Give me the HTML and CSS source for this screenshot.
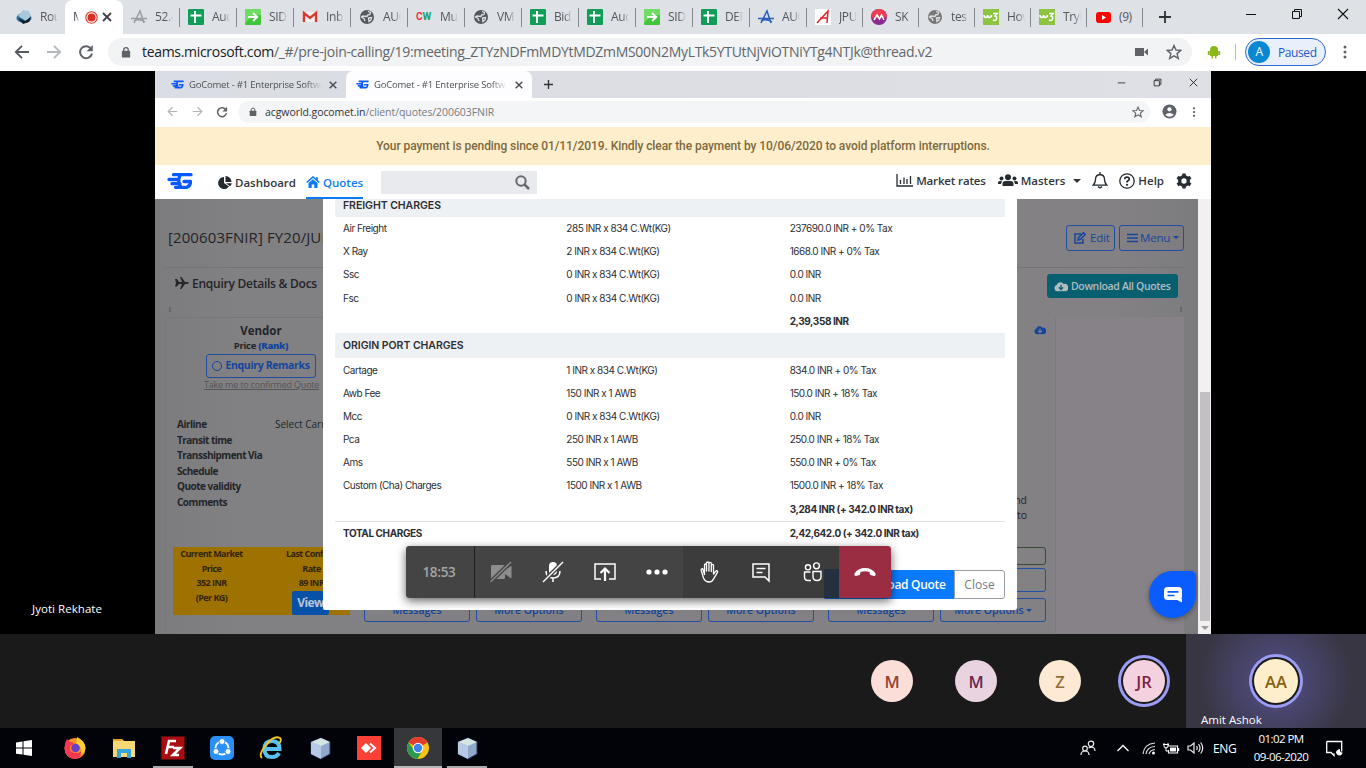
FILE: index.html
```html
<!DOCTYPE html>
<html lang="en">
<head>
<meta charset="utf-8">
<title>Meeting</title>
<link rel="stylesheet" href="styles.css">
</head>
<body>
<svg class="defs" width="0" height="0">
  <symbol id="sheet" viewBox="0 0 16 16"><rect width="16" height="16" rx="1" fill="#0f9d58"/><path d="M7 2v12M2.5 6.5h11" stroke="#fff" stroke-width="2"/></symbol>
  <symbol id="go" viewBox="0 0 16 16"><rect width="16" height="16" rx="1" fill="#3fc63b"/><path d="M0 0h16v6q-9 0-16 8z" fill="#6fdc62"/><path d="M3 8h9M8 4l4.3 4L8 12" fill="none" stroke="#fff" stroke-width="1.8"/></symbol>
  <symbol id="globe" viewBox="0 0 16 16"><circle cx="8" cy="8" r="7" fill="currentColor"/><path d="M9 2.500l2.500 1L11 5.500 8.500 6 8 7.500l-4-.5-1.500 1 2.500 1.500 1 2.500M9.500 9l3-.5-.5 2.500-2 1.500z" fill="none" stroke="#dee1e6" stroke-width="1.300"/></symbol>
  <symbol id="arch" viewBox="0 0 16 16"><path d="M3 14L9 2l4 12M0 9.5h16M3 12q5-3 11 1" fill="none" stroke="currentColor" stroke-width="1.5"/></symbol>
  <symbol id="w3" viewBox="0 0 16 16"><rect width="16" height="16" fill="#8bc53f"/><path d="M1 6q0 2.500 1.800 2.500T4.600 6q0 2.500 1.800 2.500T8.500 6M10 4.500h4l-2 2.500q2.500.5 1.500 3T10 11" fill="none" stroke="#fff" stroke-width="1.6"/></symbol>
  <symbol id="lock" viewBox="0 0 12 14"><rect x="1" y="5" width="10" height="8" rx="1" fill="#5f6368"/><path d="M3.3 6V3.8a2.7 2.7 0 015.4 0V6" fill="none" stroke="#5f6368" stroke-width="1.5"/></symbol>
  <symbol id="back" viewBox="0 0 16 16"><path d="M15 8H2M8 1.8L1.8 8 8 14.2" fill="none" stroke="currentColor" stroke-width="1.8"/></symbol>
  <symbol id="reload" viewBox="0 0 16 16"><path d="M13.2 5A6 6 0 1014 9.5" fill="none" stroke="#5f6368" stroke-width="2"/><path d="M14.8 1v6.3H8.5z" fill="#5f6368"/></symbol>
  <symbol id="star" viewBox="0 0 16 16"><path d="M8 1.5l2 4.5 4.8.4-3.7 3.2 1.2 4.8L8 11.8l-4.3 2.6 1.2-4.8L1.2 6.4 6 6z" fill="none" stroke="#5f6368" stroke-width="1.4"/></symbol>
  <symbol id="dots" viewBox="0 0 4 16"><g fill="#5f6368"><circle cx="2" cy="3" r="1.5"/><circle cx="2" cy="8" r="1.5"/><circle cx="2" cy="13" r="1.5"/></g></symbol>
  <symbol id="x" viewBox="0 0 12 12"><path d="M2 2l8 8M10 2l-8 8" stroke="currentColor" stroke-width="1.8"/></symbol>
  <symbol id="thinx" viewBox="0 0 12 12"><path d="M1 1l10 10M11 1L1 11" stroke="#111" stroke-width="1.1"/></symbol>
  <symbol id="min" viewBox="0 0 12 12"><path d="M1 6.5h10" stroke="#111"/></symbol>
  <symbol id="max" viewBox="0 0 12 12"><path d="M1.5 3.5h7v7h-7zM3.5 3.5v-2h7v7h-2" fill="none" stroke="#111"/></symbol>
  <symbol id="plus" viewBox="0 0 12 12"><path d="M6 0v12M0 6h12" stroke="#303336" stroke-width="1.8"/></symbol>
  <symbol id="comet" viewBox="0 0 26 18"><path d="M6.500 2.700H24M2 7.500h10M5 11.700h8M13 3.500q-3 6 1 11.500M8.500 15.300H20q3.500-1.500 3.500-5.800H17" fill="none" stroke="#0a58ff" stroke-width="3.300" stroke-linecap="round" stroke-linejoin="round"/></symbol>
  <symbol id="cloud" viewBox="0 0 16 12"><path d="M4 11.500a3.700 3.700 0 01-1-7.200A4.500 4.500 0 0111 3a4.300 4.300 0 012 8.500z" fill="currentColor"/><path d="M8 4v5M5.500 7L8 9.500 10.500 7" stroke="var(--hole)" stroke-width="1.500" fill="none"/></symbol>
  <symbol id="cube" viewBox="0 0 24 24"><path d="M3 6l10-4 9 4v12l-9 5-10-5z" fill="#8fa8cc" stroke="#26345f"/><path d="M3 6l10-4 9 4-9 4z" fill="#d5e5e1"/><path d="M3 6l10 4v13L3 18z" fill="#b6c9e5"/></symbol>
</svg>

<header class="tabs">
  <div class="tab first"><svg class="fav"><ellipse cx="8" cy="9" rx="7.500" ry="5" fill="#2d6f98"/><path d="M2 7l5-6 6 1 2 5-5 5z" fill="#a9c8dc"/><path d="M2 9l7 3 6-4-2 5-6 2z" fill="#13202b"/></svg><span class="tt">Rou</span></div>
  <div class="tab active"><span class="tt">M</span><svg width="13" height="13" viewBox="0 0 13 13"><circle cx="6.500" cy="6.500" r="5.700" fill="none" stroke="#d93025" stroke-width="1.100"/><circle cx="6.500" cy="6.500" r="4" fill="#d93025"/></svg><svg class="cl" width="12" height="12"><use href="#x"/></svg></div>
  <div class="tab"><svg class="fav c-gray"><use href="#arch"/></svg><span class="tt">52.4</span></div>
  <div class="tab"><svg class="fav"><use href="#sheet"/></svg><span class="tt">Auc</span></div>
  <div class="tab"><svg class="fav"><use href="#go"/></svg><span class="tt">SID</span></div>
  <div class="tab"><svg class="fav"><path d="M1 3h14v10H1z" fill="#f1f1f1"/><path d="M2 13V4l6 5 6-5v9" fill="none" stroke="#d93a2f" stroke-width="2.400"/></svg><span class="tt">Inb</span></div>
  <div class="tab"><svg class="fav c-dark"><use href="#globe"/></svg><span class="tt">AUC</span></div>
  <div class="tab"><span class="fav cw"><i>C</i>W</span><span class="tt">Mu</span></div>
  <div class="tab"><svg class="fav c-dark"><use href="#globe"/></svg><span class="tt">VM</span></div>
  <div class="tab"><svg class="fav"><use href="#sheet"/></svg><span class="tt">Bid</span></div>
  <div class="tab"><svg class="fav"><use href="#sheet"/></svg><span class="tt">Auc</span></div>
  <div class="tab"><svg class="fav"><use href="#go"/></svg><span class="tt">SID</span></div>
  <div class="tab"><svg class="fav"><use href="#sheet"/></svg><span class="tt">DEF</span></div>
  <div class="tab"><svg class="fav c-blue"><use href="#arch"/></svg><span class="tt">AUC</span></div>
  <div class="tab n"><svg class="fav"><rect width="16" height="16" fill="#fff"/><path d="M2 14L13 2l-1 12M5 9h8" fill="none" stroke="#e3202b" stroke-width="1.500"/></svg><span class="tt">JPU</span></div>
  <div class="tab n"><svg class="fav"><circle cx="8" cy="8" r="8" fill="#8b2a8f"/><path d="M0 8a8 8 0 0116 0q-8 3-16 0" fill="#ee3e51"/><path d="M3 11l3-5 2.500 4 2-4 2.500 5" fill="none" stroke="#fff" stroke-width="1.500"/></svg><span class="tt">SK</span></div>
  <div class="tab n"><svg class="fav c-mid"><use href="#globe"/></svg><span class="tt">tes</span></div>
  <div class="tab n"><svg class="fav"><use href="#w3"/></svg><span class="tt">How</span></div>
  <div class="tab n"><svg class="fav"><use href="#w3"/></svg><span class="tt">Tryi</span></div>
  <div class="tab n"><svg class="fav"><rect x="1" y="3" width="15" height="11" rx="3" fill="#f00"/><path d="M7 6l4 2.500L7 11z" fill="#fff"/></svg><span class="tt">(9)</span></div>
  <svg class="newtab" width="12" height="12"><use href="#plus"/></svg>
  <div class="win"><svg width="12" height="12"><use href="#min"/></svg><svg width="12" height="12"><use href="#max"/></svg><svg width="12" height="12"><use href="#thinx"/></svg></div>
</header>

<div class="toolbar">
  <svg class="c-dark" width="16" height="16"><use href="#back"/></svg>
  <svg class="fwd" width="16" height="16"><use href="#back"/></svg>
  <svg width="16" height="16"><use href="#reload"/></svg>
  <div class="omni">
    <svg width="10" height="13"><use href="#lock"/></svg>
    <span class="url"><b>teams.microsoft.com</b>/_#/pre-join-calling/19:meeting_ZTYzNDFmMDYtMDZmMS00N2MyLTk5YTUtNjViOTNiYTg4NTJk@thread.v2</span>
    <svg class="cam" width="13" height="10"><path d="M0 1h9v8H0zM9 5l4-3.500v7z" fill="#5f6368"/></svg>
    <svg width="16" height="16"><use href="#star"/></svg>
  </div>
  <svg class="droid" width="14" height="14"><path d="M3 5a4 4 0 018 0zM3 5h8v6H3zM0.800 6h2v4h-2zM11.200 6h2v4h-2zM4.500 11h1.500v2.500H4.500zM8 11h1.500v2.500H8z" fill="#8ab81c"/></svg>
  <i class="vsep"></i>
  <div class="profile"><span>A</span>Paused</div>
  <svg class="kebab" width="4" height="16"><use href="#dots"/></svg>
</div>

<main class="stage">
  <div class="share">
    <div class="s-tabs">
      <div class="s-tab"><svg width="13" height="9"><use href="#comet"/></svg><span>GoComet - #1 Enterprise Software</span><svg width="10" height="10"><use href="#x"/></svg></div>
      <div class="s-tab on"><svg width="13" height="9"><use href="#comet"/></svg><span>GoComet - #1 Enterprise Software</span><svg width="10" height="10"><use href="#x"/></svg></div>
      <svg class="s-plus" width="9" height="9"><use href="#plus"/></svg>
      <div class="s-win"><svg width="9" height="9"><use href="#min"/></svg><svg width="9" height="9"><use href="#max"/></svg><svg width="9" height="9"><use href="#thinx"/></svg></div>
    </div>
    <div class="s-bar">
      <svg class="dim" width="11" height="11"><use href="#back"/></svg>
      <svg class="dim flip" width="11" height="11"><use href="#back"/></svg>
      <svg width="12" height="12"><use href="#reload"/></svg>
      <div class="s-omni"><svg width="8" height="10"><use href="#lock"/></svg><span><b>acgworld.gocomet.in</b>/client/quotes/200603FNIR</span><svg width="12" height="12"><use href="#star"/></svg></div>
      <svg width="15" height="15"><circle cx="7.500" cy="7.500" r="7" fill="#5f6368"/><circle cx="7.500" cy="5.300" r="2.100" fill="#fff"/><path d="M3.200 10.800q4.300-3.600 8.600 0-4.300 3.800-8.600 0" fill="#fff"/></svg>
      <svg width="4" height="12"><use href="#dots"/></svg>
    </div>
    <div class="notice">Your payment is pending since 01/11/2019. Kindly clear the payment by 10/06/2020 to avoid platform interruptions.</div>
    <nav class="nav">
      <svg class="brand" width="26" height="18"><use href="#comet"/></svg>
      <div class="item dash"><svg width="14" height="13"><path d="M6 1a6 6 0 105 9.500L6 7z" fill="#252b31"/><path d="M7.500 0a6 6 0 016 6h-6zM8 7.200h5.800a6 6 0 01-1.800 3z" fill="#252b31"/></svg>Dashboard</div>
      <div class="item quotes"><svg width="14" height="12"><path d="M.7 6.500L7 1l6.300 5.500M11 1v3" fill="none" stroke="#0a7bf5" stroke-width="1.600"/><path d="M2.500 7L7 3.300 11.500 7v5H8.300V8.500H5.700V12H2.500z" fill="#0a7bf5"/></svg>Quotes</div>
      <div class="search"><svg width="15" height="15"><circle cx="6" cy="6" r="4.700" fill="none" stroke="#666a6e" stroke-width="2"/><path d="M9.500 9.500L14 14" stroke="#666a6e" stroke-width="2.500"/></svg></div>
      <div class="nav-r">
        <div class="item"><svg width="17" height="13"><path d="M1 0v12h16M4.500 10V6M8 10V3.500M11 10V5M14.500 10V2" fill="none" stroke="#252b31" stroke-width="1.300"/></svg>Market rates</div>
        <div class="item masters"><svg width="20" height="13"><g fill="#252b31"><circle cx="10" cy="3.200" r="3"/><circle cx="3.500" cy="4.500" r="2"/><circle cx="16.500" cy="4.500" r="2"/><path d="M4.500 12V9.500q0-2.500 3-2.500h5q3 0 3 2.500V12zM0 10V8.500q0-1.500 2-1.500h2l-1 3zM20 10V8.500q0-1.500-2-1.500h-2l1 3z"/></g></svg>Masters <i class="caret"></i></div>
        <svg class="bell" width="16" height="17"><path d="M1 13.200q2.500-2 2.500-6 0-4.200 4.500-4.700 4.500.5 4.500 4.700 0 4 2.500 6zM8 0v2.500M6 14.500q2 2.500 4 0" fill="none" stroke="#252b31" stroke-width="1.300"/></svg>
        <div class="item help"><svg width="16" height="16"><circle cx="8" cy="8" r="7.200" fill="none" stroke="#252b31" stroke-width="1.300"/><path d="M5.700 6.300q.1-2.200 2.300-2.200t2.300 1.800q0 1.200-2.300 2.500v1" fill="none" stroke="#252b31" stroke-width="1.700"/><circle cx="8" cy="11.800" r="1.100" fill="#252b31"/></svg>Help</div>
        <svg class="gear" width="16" height="16" viewBox="-8 -8 16 16"><circle r="4.300" fill="none" stroke="#252b31" stroke-width="3.300"/><path d="M0-7.600V-5M0 7.600V5M6.600-3.800L4.300-2.500M-6.600-3.800L-4.300-2.500M6.600 3.800L4.300 2.500M-6.600 3.800L-4.300 2.500" stroke="#252b31" stroke-width="3.400"/></svg>
      </div>
    </nav>

    <div class="view">
      <section class="page">
        <div class="head"><h1>[200603FNIR] FY20/JUN</h1>
          <span class="btn"><svg width="12" height="12"><path d="M7 2H1v9h8V7M4 8l.5-2.300L9.500.7l1.800 1.800-5 5z" fill="none" stroke="#16459c" stroke-width="1.500"/></svg>Edit</span>
          <span class="btn menu"><svg width="11" height="10"><path d="M0 1.500h11M0 5h11M0 8.500h11" stroke="#16459c" stroke-width="1.500"/></svg>Menu<i class="caret"></i></span>
        </div>
        <div class="docs"><svg width="14" height="12"><path d="M0 2l2 0 2 3h3L5 0h1.500L10 5q4-.3 4 1t-4 1L6.500 12H5l2-5H4L2 9.500H0L1 6z" fill="#24262a"/></svg><span>Enquiry Details &amp; Docs</span>
          <span class="dl"><svg width="14" height="11" viewBox="0 0 16 12"><use href="#cloud"/></svg>Download All Quotes</span></div>
        <div class="ticks"><i></i><i></i></div>
        <div class="cards">
          <aside class="vendor">
            <h2>Vendor</h2><p class="price">Price <b>(Rank)</b></p>
            <span class="remarks"><i></i>Enquiry Remarks</span>
            <u>Take me to confirmed Quote</u>
            <dl><dt>Airline</dt><dd>Select Carrier</dd><dt>Transit time</dt><dd></dd><dt>Transshipment Via</dt><dd></dd><dt>Schedule</dt><dd></dd><dt>Quote validity</dt><dd></dd><dt>Comments</dt><dd></dd></dl>
            <div class="market"><div>Current Market<br>Price<br>352 INR<br>(Per KG)</div><div class="last">Last Confirm<br>Rate<br>89 INR<span class="view-b">View</span></div></div>
          </aside>
          <div class="quotes-row">
            <div class="pair"><span>Messages</span><span>More Options</span></div>
            <div class="pair"><span>Messages</span><span>More Options</span></div>
            <div class="pair lastcol"><svg class="cd" width="12" height="10" viewBox="0 0 16 12"><use href="#cloud"/></svg><p>and<br>to</p><em></em><em class="b"></em><div class="pair"><span>Messages</span><span>More Options<i class="caret"></i></span></div></div>
          </div>
          <div class="blank"></div>
        </div>
      </section>
      <div class="sb"><i></i><b></b></div>
      <div class="chat"><svg width="20" height="17"><rect x="1" y="1" width="18" height="13" rx="3.500" fill="#fff"/><path d="M12 13h7v3.500z" fill="#fff"/><path d="M4.500 5.800h11M4.500 9.500h7" stroke="#0a5cff" stroke-width="1.700"/></svg></div>

      <div class="modal">
        <table>
          <tr class="h top"><th colspan="3">FREIGHT CHARGES</th></tr>
          <tr><td>Air Freight</td><td>285 INR x 834 C.Wt(KG)</td><td>237690.0 INR + 0% Tax</td></tr>
          <tr><td>X Ray</td><td>2 INR x 834 C.Wt(KG)</td><td>1668.0 INR + 0% Tax</td></tr>
          <tr><td>Ssc</td><td>0 INR x 834 C.Wt(KG)</td><td>0.0 INR</td></tr>
          <tr><td>Fsc</td><td>0 INR x 834 C.Wt(KG)</td><td>0.0 INR</td></tr>
          <tr class="sum"><td></td><td></td><td>2,39,358 INR</td></tr>
          <tr class="h"><th colspan="3">ORIGIN PORT CHARGES</th></tr>
          <tr><td>Cartage</td><td>1 INR x 834 C.Wt(KG)</td><td>834.0 INR + 0% Tax</td></tr>
          <tr><td>Awb Fee</td><td>150 INR x 1 AWB</td><td>150.0 INR + 18% Tax</td></tr>
          <tr><td>Mcc</td><td>0 INR x 834 C.Wt(KG)</td><td>0.0 INR</td></tr>
          <tr><td>Pca</td><td>250 INR x 1 AWB</td><td>250.0 INR + 18% Tax</td></tr>
          <tr><td>Ams</td><td>550 INR x 1 AWB</td><td>550.0 INR + 0% Tax</td></tr>
          <tr><td>Custom (Cha) Charges</td><td>1500 INR x 1 AWB</td><td>1500.0 INR + 18% Tax</td></tr>
          <tr class="sum"><td></td><td></td><td>3,284 INR (+ 342.0 INR tax)</td></tr>
          <tr class="sum total"><td>TOTAL CHARGES</td><td></td><td>2,42,642.0 (+ 342.0 INR tax)</td></tr>
        </table>
        <div class="foot"><span class="dq"><svg width="15" height="12" viewBox="0 0 16 12"><use href="#cloud"/></svg>Download Quote</span><span class="close">Close</span></div>
      </div>
    </div>
  </div>
  <span class="speaker">Jyoti Rekhate</span>

  <div class="call">
    <span class="time">18:53</span>
    <span><svg width="24" height="24"><path d="M2 6.500q0-1.500 1.500-1.500h11q1.500 0 1.500 1.500V10l6.500-4.500v13L16 14v3.500q0 1.500-1.500 1.500h-11Q2 19 2 17.500z" fill="#8d8d8d"/><path d="M1.500 22L22 2" stroke="#444" stroke-width="4"/><path d="M1.500 22L22 2" stroke="#8d8d8d" stroke-width="1.300"/></svg></span>
    <span><svg width="24" height="24"><rect x="8" y="2" width="8" height="13" rx="4" fill="#fff"/><path d="M5 11q0 7 7 7t7-7M12 18v4" fill="none" stroke="#fff" stroke-width="1.500"/><path d="M2 22L22 2" stroke="#444" stroke-width="4"/><path d="M2 22L22 2" stroke="#fff" stroke-width="1.400"/></svg></span>
    <span><svg width="24" height="24"><path d="M8 19H2V4h20v15h-6" fill="none" stroke="#fff" stroke-width="1.500"/><path d="M12 21V9M7.500 13L12 8.500l4.500 4.500" fill="none" stroke="#fff" stroke-width="2.200"/></svg></span>
    <span><svg width="24" height="24"><g fill="#fff"><circle cx="4" cy="12" r="2.600"/><circle cx="12" cy="12" r="2.600"/><circle cx="20" cy="12" r="2.600"/></g></svg></span>
    <span class="d"><svg width="24" height="24"><path d="M7.500 14.500V5.200q0-1.200 1-1.200t1 1.200V11 3.200Q9.500 2 10.700 2t1.200 1.200V11 3.500q0-1.200 1.200-1.200t1.200 1.200V11.500 5.500q0-1.200 1.100-1.200t1.100 1.200v8.500l2.300-2.800q1-1 1.700-.2.400.6-.2 1.600l-4 6.800Q15 22 12.500 22 8 22 6.500 18L4.200 10.500q-.3-1.500.6-1.700t1.300 1z" fill="none" stroke="#fff" stroke-width="1.300" stroke-linejoin="round"/></svg></span>
    <span class="d"><svg width="24" height="24"><path d="M4 4h16v17l-4-4H4zM7.500 8.500h9M7.500 12.500h6" fill="none" stroke="#fff" stroke-width="1.500"/></svg></span>
    <span class="d clear"><svg width="24" height="24"><g fill="none" stroke="#fff" stroke-width="1.400"><circle cx="7" cy="7.300" r="2.600"/><circle cx="15.500" cy="5.800" r="2.900"/><path d="M9.500 12H3.500v5q0 3.500 3.500 3.500h3M12 11.500h8v5q0 4-4 4t-4-4z"/></g></svg></span>
    <span class="end"><svg width="24" height="24"><path d="M1.500 13.500Q5 8 12 8t10.500 5.500q.5 2.500-1.500 2.500l-3.500-1q-1-.5-.9-3-4.500-1.500-9.200 0 .1 2.500-.9 3L3 16q-2 0-1.500-2.500z" fill="#fff"/></svg></span>
  </div>
</main>

<section class="people">
  <div class="p"><span class="av a1">M</span></div><div class="p"><span class="av a2">M</span></div><div class="p"><span class="av a3">Z</span></div><div class="p"><span class="av a4 ring">JR</span></div>
  <div class="me"><span class="av a5 ring">AA</span><span class="nm">Amit Ashok</span></div>
</section>

<footer class="task">
  <span class="start"><svg width="24" height="24"><path d="M4 6.500l6.500-1v6H4zM11.500 5.300L20 4v7.500h-8.500zM4 12.500h6.500v6L4 17.700zM11.500 12.500H20V20l-8.500-1.300z" fill="#fff"/></svg></span>
  <span><svg width="24" height="24"><circle cx="12" cy="12.500" r="10.500" fill="#ff9224"/><path d="M1.500 12Q2 6 4 3l3 3q3 0 4 2-4 1-4 4 0 5 6 5t7-5q0 9-7 11Q3 24 1.500 12z" fill="#f4384f"/><path d="M14 1q8 4 8.500 11-1 6-5 7 3-8-4-11 0-4 .5-7z" fill="#ffcf35"/><circle cx="12.500" cy="12" r="4.300" fill="#6b3fc4"/></svg></span>
  <span><svg width="24" height="24"><path d="M1 3h9l2 2h11v16H1z" fill="#f8d775"/><path d="M1 3h9l1 2H1z" fill="#e2a52f"/><path d="M5 22v-9h14v9h-4v-5H9v5z" fill="#36a5df"/></svg></span>
  <span class="run"><svg width="24" height="24"><rect x=".5" y=".5" width="23" height="23" fill="#a90d12" stroke="#5c090b" stroke-dasharray="2 1"/><path d="M5 18L8 5h7M6.500 11H13M12 12h7l-7 7h6" fill="none" stroke="#fff" stroke-width="2.600"/></svg></span>
  <span><svg width="24" height="24"><rect width="24" height="24" rx="5" fill="#2a8ff7"/><circle cx="12" cy="12" r="6.500" fill="none" stroke="#fff" stroke-width="1.800"/><g fill="#fff" stroke="#2a8ff7"><circle cx="12" cy="5.500" r="3"/><circle cx="6" cy="15.500" r="3"/><circle cx="18" cy="15.500" r="3"/></g></svg></span>
  <span><svg width="24" height="24"><path d="M6.500 13h14q0-8-7.500-8t-7.500 8 7.500 8q5 0 7-4" fill="none" stroke="#57c1ee" stroke-width="4"/><path d="M3 22Q-1 19 7 9T21 2q2 2-1 6" fill="none" stroke="#f5c521" stroke-width="1.900"/></svg></span>
  <span><svg width="24" height="24"><use href="#cube"/></svg></span>
  <span><svg width="24" height="24"><rect width="24" height="24" fill="#ff4036"/><path d="M4 12l5-5 5 5-5 5z" fill="#fff"/><path d="M13 7.500l5 4.500-5 4.500" fill="none" stroke="#fff" stroke-width="2"/></svg></span>
  <span class="cur"><svg width="24" height="24"><circle cx="12" cy="12" r="11" fill="#fbc116"/><path d="M2.500 6.500A11 11 0 0121.500 6.500L12 12z" fill="#e33b2e"/><path d="M2.500 6.500A11 11 0 0011.500 23l4.500-8-8-1z" fill="#299b4e"/><circle cx="12" cy="12" r="5.200" fill="#fff"/><circle cx="12" cy="12" r="4.200" fill="#3f82ee"/></svg></span>
  <span class="run"><svg width="24" height="24"><use href="#cube"/></svg></span>
  <div class="tray">
    <svg width="16" height="16"><g fill="none" stroke="#eee" stroke-width="1.200"><circle cx="11" cy="3.800" r="2.700"/><circle cx="5" cy="8.500" r="2.300"/><path d="M1 15q0-4 4-4t4 4M8.500 8Q15 5.500 15 11"/></g></svg>
    <svg class="up" width="12" height="8"><path d="M.5 7L6 1.500 11.500 7" fill="none" stroke="#fff" stroke-width="1.300"/></svg>
    <svg width="14" height="14"><g fill="none" stroke="#ddd" stroke-width="1.200"><path d="M1 13Q2 3 13 2M4 13q1-7 9-7.500M7 13q1-4 6-4.500"/></g><circle cx="11.500" cy="12" r="1.500" fill="#fff"/></svg>
    <svg class="bat" width="17" height="14"><path d="M4.500 5h10v7h-9V9" fill="none" stroke="#fff" stroke-width="1.200"/><path d="M7 6.500h6v4H7zM15 7h1.200v3H15z" fill="#fff"/><path d="M1 2v3q0 2 2 2t2-2V2M0 3.500h6M3 6v4h2" fill="none" stroke="#fff"/></svg>
    <svg class="vol" width="17" height="14"><path d="M1 5h2.500L7 2v10L3.500 9H1zM9.500 5q1.500 2 0 4M11.500 3q3 4 0 8M13.700 1.500q4 5.500 0 11" fill="none" stroke="#eee" stroke-width="1.200"/></svg>
    <span class="eng">ENG</span>
    <span class="clock">01:02 PM<br>09-06-2020</span>
    <svg class="act" width="17" height="17"><path d="M.7 1.500h15v10M.7 1.500v11H5l3 3v-2" fill="none" stroke="#fff" stroke-width="1.300"/><path d="M14 9q-4 1-4 3.500 1 3.500 4.500 3 2-1 2-3-3 0-2.500-3.500z" fill="#fff"/></svg>
    <i></i>
  </div>
</footer>
</body>
</html>
```

FILE: styles.css
```css
*{box-sizing:border-box}
body{margin:0;width:1366px;height:768px;overflow:hidden;background:#000;font-family:"Open Sans","Noto Sans",sans-serif;font-size:12px;--hole:#7d8085}
.defs{position:absolute}
svg{flex:none;display:block}
i,em{font-style:normal}
h1,h2,p,dl,dd{margin:0}
.c-dark{color:#55595e}.c-gray{color:#9a9da1}.c-blue{color:#2b5fb8}.c-mid{color:#777}
.tabs{display:flex;height:34px;background:#dee1e6}
.tab{width:57px;display:flex;align-items:center;padding-left:8px;position:relative;color:#54585d}
.tab.n{width:56px}
.tab:after{content:"";position:absolute;right:0;top:8px;width:1px;height:19px;background:#85898e}
.tab.first:after,.tab.active:after{display:none}
.fav{width:16px;height:16px;margin-right:8px;flex:none}
.tt{width:18px;overflow:hidden;white-space:nowrap;font-size:12px;line-height:18px;letter-spacing:-.4px;-webkit-mask-image:linear-gradient(90deg,#000 60%,transparent)}
.tab:nth-last-child(3) .tt{-webkit-mask-image:none}
.tab.first{width:65px;padding-left:16px}
.tab.active{width:58px;background:#fff;border-radius:8px 8px 0 0;color:#4c4f53}
.tab.active .tt{width:6px;margin-right:6px}
.tab.active .cl{margin-left:3px;color:#3c4043}
.cw{font:bold 10px/16px Roboto,sans-serif;color:#18a06a}.cw i{color:#e34}
.newtab{margin:11px 0 0 16px}
.win{display:flex;gap:34px;margin:8px 0 0 74px}
.toolbar{display:flex;align-items:center;height:37px;padding:0 0 1px 14px;background:#fff}
.toolbar>svg:nth-child(-n+3){margin-right:16px}
.fwd{color:#b5b8bb;transform:scaleX(-1)}
.omni{display:flex;align-items:center;width:1084px;height:28px;margin-left:-2px;padding:0 10px 0 13px;border-radius:14px;background:#f1f3f4}
.url{flex:1;margin-left:11px;font-size:14px;line-height:20px;color:#62666a;white-space:nowrap;letter-spacing:-.31px}
.url b{font-weight:400;color:#202124}
.cam{margin-right:18px}
.droid{margin-left:15px}
.vsep{width:1px;height:16px;margin:0 9px 0 14px;background:#bbb}
.profile{display:flex;align-items:center;width:81px;height:28px;padding-left:2px;border:1px solid #2b68d0;border-radius:14px;background:#e9effb;color:#1a5bc9;font-size:12px;letter-spacing:-.4px}
.profile span{width:22px;height:22px;margin-right:8px;border-radius:50%;background:#0788d1;color:#fff;text-align:center;line-height:22px}
.kebab{margin-left:17px}
.stage{position:relative;height:563px;padding-left:155px;background:#000}
.share{width:1056px;height:563px;background:#fff;overflow:hidden}
.s-tabs{display:flex;height:27px;background:linear-gradient(90deg,#dadde3,#dfdfe6);font-size:9.500px;color:#4c5055}
.s-tab{display:flex;align-items:center;width:191px;padding:0 8px 0 16px}
.s-tab.on{width:186px;padding-left:10px;background:#fdfdff;border-radius:7px 7px 0 0}
.s-tab span{width:135px;margin:0 6px 0 5px;overflow:hidden;white-space:nowrap;letter-spacing:-.2px;-webkit-mask-image:linear-gradient(90deg,#000 88%,transparent)}
.s-tab.on span{margin-right:7px}
.s-plus{margin:9px 0 0 12px}
.s-win{display:flex;gap:27px;margin:7px 0 0 auto;padding-right:13px}
.s-bar{display:flex;align-items:center;height:29px;padding:0 12px 2px;background:#fff}
.dim{color:#b2b5ba;margin-right:14px}.flip{transform:scaleX(-1)}
.s-bar>svg:nth-child(3){margin-left:-1px}
.s-omni{display:flex;align-items:center;width:912px;height:22px;margin:0 12px 0 10px;padding:0 6px 0 11px;border-radius:11px;background:#f4f5f7;font-size:10.500px;color:#777b80}
.s-omni span{flex:1;margin-left:8px;letter-spacing:-.07px}.s-omni b{font-weight:400;color:#333}
.s-bar>svg:last-child{margin-left:15px}
.notice{height:38px;background:#ffeecb;color:#7c693e;text-align:center;font:500 12px/38px Roboto,sans-serif;letter-spacing:-.07px;white-space:nowrap}
.nav{display:flex;align-items:center;height:34px;padding:0 19px 0 12px;background:#fff}
.brand{margin-top:-2px}
.item{display:flex;align-items:center;gap:3px;font-weight:600;font-size:11.500px;color:#30363c;white-space:nowrap}
.dash{margin-left:25px}
.quotes{height:34px;margin-left:10px;padding-top:2px;color:#0a7bf5;border-bottom:2px solid #0a7bf5}
.search{display:flex;justify-content:flex-end;align-items:center;width:156px;height:23px;margin-left:18px;padding-right:7px;background:#e9eaed}
.nav-r{display:flex;align-items:center;margin:-3px 0 0 auto}
.nav-r .item:first-child{letter-spacing:-.15px}
.masters{margin-left:12px}
.caret{display:inline-block;margin-left:5px;border:4px solid transparent;border-top-color:currentColor;border-bottom:0}
.bell{margin:0 11px}.gear{margin-left:12px}
.view{position:relative;display:flex;height:435px}
.page{width:1043px;height:435px;padding:0 11px 0 10px;background:linear-gradient(90deg,#7c7c7e,#818083 8%,#848185 92%,#7b7b7d);color:#242428;overflow:hidden}
.head{display:flex;align-items:center;height:68px;padding:7px 3px 0 3px;font-size:11.500px;letter-spacing:-.2px}
.head h1{flex:1;font-weight:400;font-size:15px;letter-spacing:.1px}
.btn{display:flex;align-items:center;gap:4px;width:49px;height:26px;margin:2px 0 0 4px;padding-left:7px;border:1px solid #204ea2;border-radius:3px;color:#16459c}
.btn.menu{width:65px;gap:2px}
.btn .caret{margin:0 0 0 1px;border-width:3.500px;border-bottom:0}
.docs{display:flex;align-items:center;gap:3px;height:36px;margin-right:3px;padding:0 6px 5px 10px;border-top:1px solid #737376;font-weight:600;font-size:12px;letter-spacing:-.25px}
.docs>span:nth-child(2){flex:1}
.dl{display:flex;align-items:center;gap:3px;width:131px;height:24px;margin-top:6px;padding:0 7px;border-radius:3px;background:#075f70;color:#b2bcc0;font-size:10.500px;--hole:#075f70;white-space:nowrap;letter-spacing:-.35px}
.ticks{display:flex;justify-content:space-between;padding:4px 5px 0 4px;height:14px}
.ticks i{width:2px;height:5px;background:#68686c}
.cards{display:flex;height:317px}
.vendor{width:190px;padding:4px 0 0 7px;border-left:1px solid #79797b;border-top:1px solid #77777a;text-align:center;font-weight:600;font-size:10.500px;line-height:15.500px}
.vendor h2{margin-right:6px;font-weight:700;font-size:11.500px;line-height:17px}
.price{margin:0 6px 1px 0;line-height:14px;font-weight:700;font-size:9.500px;letter-spacing:-.3px}
.price b{color:#12459e}
.remarks{display:flex;align-items:center;justify-content:center;gap:3px;width:110px;height:24px;margin-left:33px;border:1px solid #204ea2;border-radius:3px;color:#12459e;font-weight:700;font-size:10.500px;letter-spacing:-.35px;white-space:nowrap}
.remarks i{width:10px;height:10px;border:1px solid #12459e;border-radius:50%}
.vendor u{display:block;margin-left:31px;width:116px;font-weight:400;font-size:9px;line-height:13px;letter-spacing:-.2px;text-align:left;color:#555559;white-space:nowrap}
.vendor dl{display:grid;grid-template-columns:98px 1fr;margin:26px 0 0 4px;text-align:left;white-space:nowrap;grid-auto-rows:15.500px;font-weight:700;font-size:10px;letter-spacing:-.55px}
.vendor dt{letter-spacing:-.5px}
.vendor dd{font-weight:400;letter-spacing:0;overflow:hidden}
.market{display:flex;width:177px;height:68px;margin-top:37px;background:#9e7200;color:#31240c;font-size:9px;line-height:14.700px;font-weight:700;white-space:nowrap;letter-spacing:-.55px}
.market>div{width:77px}.market .last{width:100px;padding-left:23px;position:relative}
.view-b{position:absolute;left:42px;top:44px;width:37px;height:24px;background:#0752a8;color:#b8c6d8;line-height:24px;font-size:12px;border-radius:2px}
.quotes-row{display:flex;gap:14px;margin-left:9px;align-items:flex-end;padding-bottom:12px}
.pair{display:flex;gap:6px;width:218px}
.pair span{flex:1;height:24px;border:1px solid #204ea2;border-radius:3px;color:#12459e;text-align:center;font-weight:600;font-size:10.500px;line-height:22px;white-space:nowrap}
.pair .caret{margin-left:2px;vertical-align:2px;border-width:3px;border-bottom:0}
.lastcol{flex-direction:column;align-items:stretch;gap:0}
.cd{align-self:flex-end;margin-bottom:0;color:#12459e}
.lastcol p{margin:158px 19px 24px 0;text-align:right;font-size:10.500px;line-height:15px}
.lastcol em{height:18px;margin-bottom:3px;border:1px solid #354c32;border-radius:3px}
.lastcol em.b{height:24px;margin-bottom:6px;border-color:#204ea2}
.blank{flex:1;margin-left:9px;background:#868287;border-left:1px solid #7d7b7f;border-right:3px solid #7d7b7f}
.sb{display:flex;flex-direction:column;align-items:center;width:13px;padding:193px 0 4px;background:#f3f0f2}
.sb i{width:10px;height:230px;background:#c2c0c2;margin-bottom:5px}
.sb b{border:4px solid transparent;border-top-color:#999;border-bottom:0}
.chat{position:absolute;left:994px;top:372px;display:grid;place-items:center;width:47px;height:47px;border-radius:50% 5px 50% 50%;background:#0a5cff;box-shadow:0 2px 5px #0005}
.modal{position:absolute;left:168px;top:0;width:694px;height:411px;padding:0 12px;background:#fff;border-radius:0 0 2px 2px}
table,tbody{display:block;width:670px}
table{font-family:Inter,sans-serif;font-size:10px;letter-spacing:-.48px;color:#2c2e34}
tr{display:flex;align-items:center;height:23.200px}
td,th{width:223.500px;padding:0 0 1px 8px;text-align:left;white-space:nowrap;line-height:14px}
.h{height:25.500px;background:#eef1f4}.h th{padding-bottom:0;font-size:10.500px;font-weight:600;letter-spacing:-.05px}
.top{height:18px}.top th{padding-bottom:5px}
.sum td{font-weight:700;letter-spacing:-.4px}.total{border-top:1px solid #dcdfe3;height:24px}
.foot{display:flex;justify-content:flex-end;margin-top:25px;line-height:29px}
.dq{display:flex;align-items:center;gap:4px;width:131px;height:29px;padding-left:10px;background:#0a7bff;color:#fff;font-weight:600;font-size:12px;letter-spacing:-.3px;white-space:nowrap;--hole:#0a7bff;border-radius:3px 0 0 3px}
.close{width:51px;height:29px;border:1px solid #969ca2;border-radius:0 3px 3px 0;color:#73797f;text-align:center;font-size:12px;line-height:27px}
.speaker{position:absolute;left:32px;top:530px;color:#fff;font-size:11.500px;line-height:16px;letter-spacing:.05px}
.call{position:absolute;left:406px;top:475px;display:flex;height:52px;border-radius:3px;overflow:hidden;box-shadow:0 3px 10px #0009}
.call span{display:grid;place-items:center;width:52px;background:#444}
.call .time{width:69px;padding-right:2px;border-right:1px solid #1d1d1d;color:#a5a5a5;font-weight:600;font-size:13.500px;letter-spacing:-.3px}
.call .d{background:#3c3c3c}
.call .clear{background:linear-gradient(#3c3c3c 45%,#243040 45%) 37px 0/15px 100% no-repeat,#3c3c3c}
.call .end{background:#9b2d43}
.people{display:flex;justify-content:flex-end;height:94px;background:#1b1a1a}
.p{width:84px;display:grid;place-items:center}
.av{display:grid;place-items:center;width:42px;height:42px;border-radius:50%;font-size:16.500px;font-weight:600}
.a1{background:#fbded7;color:#8e4438}.a2{background:#ead3e1;color:#68284f}.a3{background:#fde9d4;color:#976b35}.a4{background:#f4d1de;color:#7b2245}.a5{width:44px;height:44px;background:#feeecb;color:#84610d}
.ring{box-shadow:0 0 0 2px #1b1a1a,0 0 0 5px #9a9cf5}
.me{position:relative;display:grid;place-items:center;width:180px;background:radial-gradient(circle at 50% 50%,#55508a 0,#47446a 35%,#383643 75%)}
.nm{position:absolute;left:15px;top:78px;color:#fff;font-size:11.500px;line-height:16px}
.task{display:flex;height:40px;background:#010308;color:#fff}
.task>span{display:grid;place-items:center;width:48px;margin-right:1px;height:40px}
.task .start{margin-right:3px}
.task .run{width:40px;margin:0 5px 0 4px;box-shadow:inset 0 -2px #aaa}
.task .cur{background:#36373b;box-shadow:inset 0 -2px #b7b7b7}
.tray{display:flex;align-items:center;margin-left:auto}
.up{margin:0 13px 0 21px}.bat{margin-left:7px}.vol{margin:0 9px 0 7px}
.eng{width:38px;font-size:12px;letter-spacing:-.4px}
.clock{width:60px;text-align:center;font-size:11.500px;line-height:18px;letter-spacing:-.55px;white-space:nowrap}
.act{margin:0 23px 0 15px}
.tray i{width:1px;height:40px;margin-right:-1px;background:#555}
```
